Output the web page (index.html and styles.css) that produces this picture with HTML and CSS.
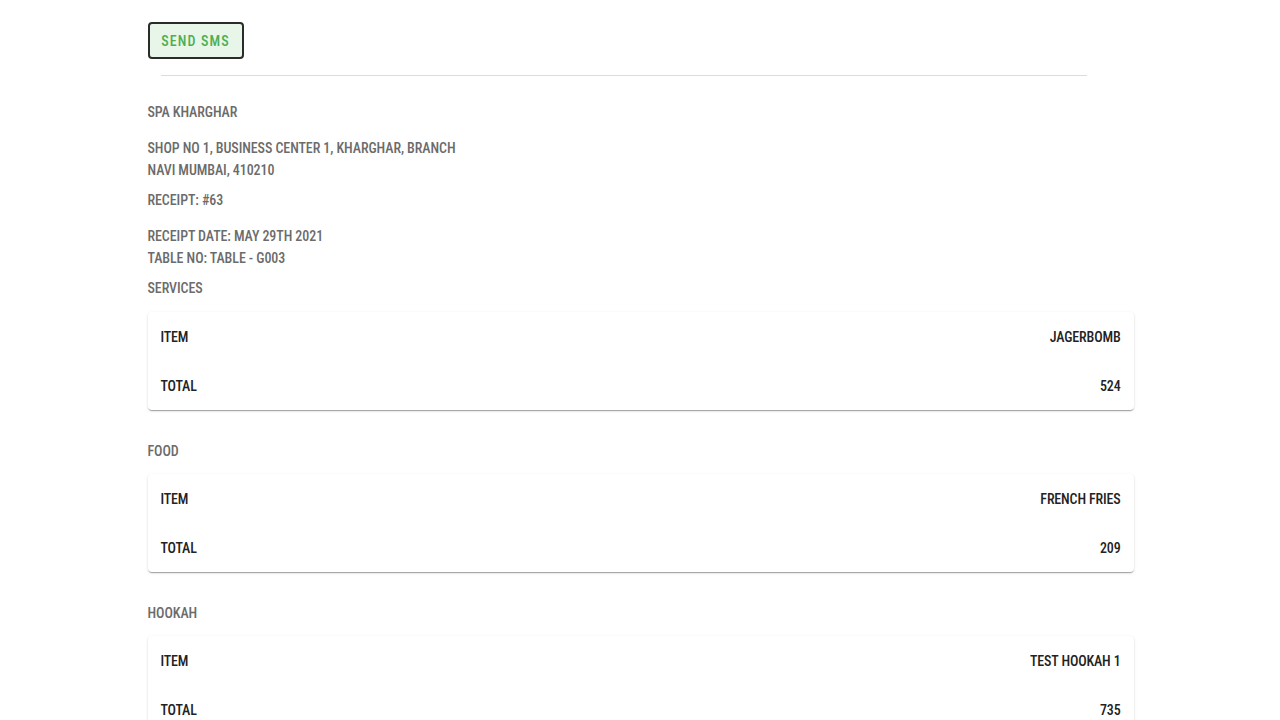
FILE: index.html
```html
<!DOCTYPE html>
<html>
<head>
<meta charset="utf-8">
<link rel="stylesheet" href="styles.css">
</head>
<body>
<div class="page">
  <button class="sms-btn">SEND SMS</button>
  <hr class="divider">
  <p class="info shop">SPA KHARGHAR</p>
  <p class="info address">SHOP NO 1, BUSINESS CENTER 1, KHARGHAR, BRANCH<br>NAVI MUMBAI, 410210</p>
  <p class="info receipt">RECEIPT: #63</p>
  <p class="info date">RECEIPT DATE: MAY 29TH 2021<br>TABLE NO: TABLE - G003</p>

  <section class="section">
    <p class="info label">SERVICES</p>
    <div class="card">
      <div class="row"><span>ITEM</span><span>JAGERBOMB</span></div>
      <div class="row"><span>TOTAL</span><span>524</span></div>
    </div>
  </section>

  <section class="section">
    <p class="info label">FOOD</p>
    <div class="card">
      <div class="row"><span>ITEM</span><span>FRENCH FRIES</span></div>
      <div class="row"><span>TOTAL</span><span>209</span></div>
    </div>
  </section>

  <section class="section">
    <p class="info label">HOOKAH</p>
    <div class="card">
      <div class="row"><span>ITEM</span><span>TEST HOOKAH 1</span></div>
      <div class="row"><span>TOTAL</span><span>735</span></div>
    </div>
  </section>
</div>
</body>
</html>
```

FILE: styles.css
```css
html, body {
  margin: 0;
  padding: 0;
  background: #ffffff;
}

body {
  font-family: "Roboto Condensed", "Liberation Sans Narrow", "DejaVu Sans Condensed", Roboto, sans-serif;
  font-size: 14px;
}

.page {
  width: 986px;
  margin: 0 auto;
  padding-top: 22px;
  padding-left: 1px;
}

.sms-btn {
  display: block;
  width: 96px;
  height: 37px;
  border: 2px solid #2b2b2b;
  border-radius: 4px;
  background: #e8f5e9;
  color: #4caf50;
  font-family: "Roboto Condensed", Roboto, sans-serif;
  font-weight: 500;
  font-size: 14px;
  letter-spacing: 1.1px;
  padding: 0;
  box-sizing: border-box;
}

.divider {
  border: none;
  border-top: 1px solid #dcdcdc;
  width: 926px;
  margin: 16px 0 0 13px;
  height: 0;
}

.info {
  margin: 0;
  color: #6b6b6b;
  font-weight: 500;
  line-height: 22px;
  letter-spacing: -0.08px;
}

.shop { margin-top: 25px; }
.address { margin-top: 14px; }
.receipt { margin-top: 8px; }
.date { margin-top: 14px; }

.section { margin-top: 8px; }
.section + .section { margin-top: 30px; }

.label { margin-bottom: 13px; }
.section + .section .label { margin-bottom: 12px; }

.card {
  background: #fff;
  border-radius: 4px;
  box-shadow: 0 2px 1px -1px rgba(0,0,0,0.2), 0 1px 1px 0 rgba(0,0,0,0.14), 0 1px 3px 0 rgba(0,0,0,0.12);
}

.row {
  display: flex;
  justify-content: space-between;
  align-items: center;
  height: 49px;
  padding: 0 13px;
  color: #222;
  font-weight: 500;
  letter-spacing: -0.15px;
}
```
